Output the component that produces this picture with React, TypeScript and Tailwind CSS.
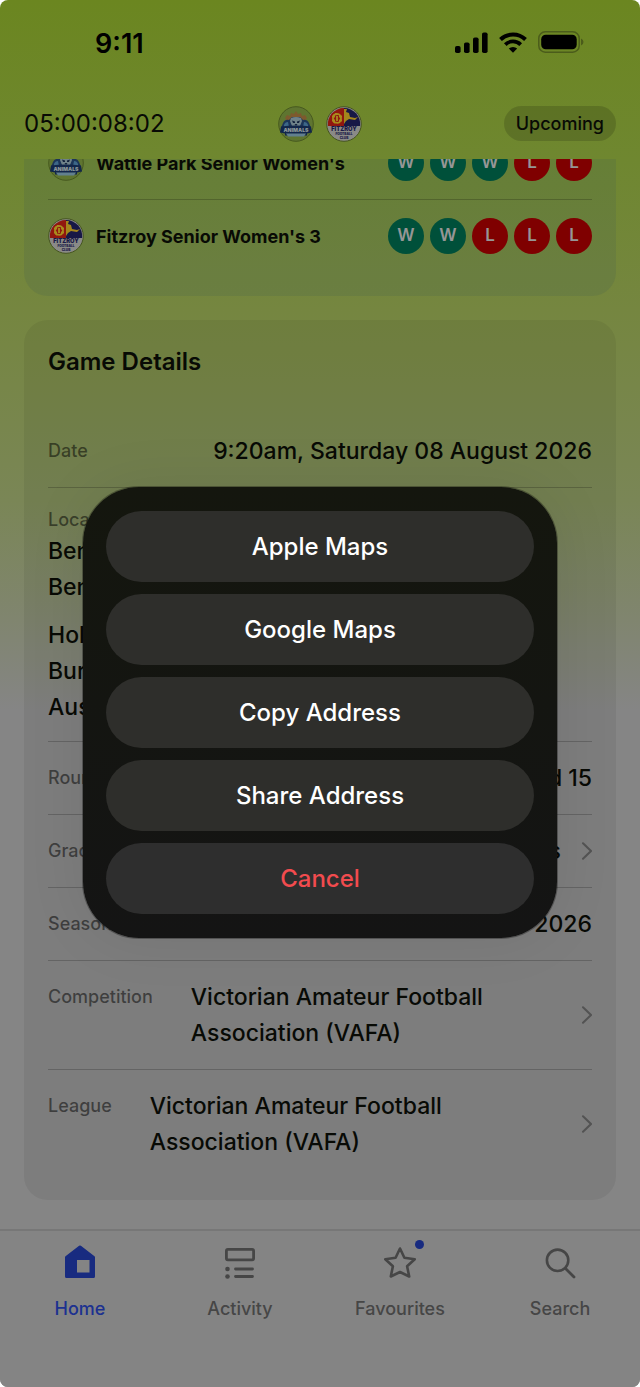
import React from 'react';

type Result = 'W' | 'L';

interface Team {
  name: string;
  logo: React.FC;
  form: Result[];
}

const AnimalsLogo: React.FC = () => (
  <svg viewBox="0 0 36 36" className="h-9 w-9 shrink-0" role="img" aria-label="Wattle Park">
    <circle cx="18" cy="18" r="17.3" fill="#5f7530" stroke="#47591f" strokeWidth="1" />
    <path d="M9 15l-2-3 2-3 3 1 1-3 3 1 2-3 2 3 3-1 1 3 3-1 2 3-2 3z" fill="#7d5a2e" />
    <path d="M5 17q2-4 6-3l3-3h8l3 3q4-1 6 3l2 5H3z" fill="#1c3558" />
    <path d="M6 19q1-3 4-3l1 5H6z M30 19q-1-3-4-3l-1 5h5z" fill="#3d6788" />
    <path d="M13 12q5-2 10 0l1 3-2 5q-4 3-8 0l-2-5z" fill="#6f8289" />
    <path d="M14 14.500l3 1v1.500h-2z M22 14.500l-3 1v1.500h2z M16.500 18h3L18 20z" fill="#14233d" />
    <path d="M3 20.500q15-2 30 0l1 6-5 1v2H7v-2l-5-1z" fill="#12264a" />
    <path d="M8 27.500h20l-2 3H10z" fill="#62808f" />
    <text
      x="18"
      y="26"
      textAnchor="middle"
      fontFamily="Inter, sans-serif"
      fontSize="5.2"
      fontWeight="900"
      fill="#8b9698"
    >
      ANIMALS
    </text>
  </svg>
);

const FitzroyLogo: React.FC = () => (
  <svg viewBox="0 0 36 36" className="h-9 w-9 shrink-0" role="img" aria-label="Fitzroy">
    <circle cx="18" cy="18" r="17.3" fill="#8a8a87" stroke="#465520" strokeWidth="1" />
    <path d="M2 20a16 16 0 0 1 16-18v18z" fill="#91170f" />
    <path d="M18 2a16 16 0 0 1 16 18H18z" fill="#171846" />
    <path d="M18 3h3l-1 3 3 1 1 4 5 1 3-1-3 3-6-1-3 2-2 3z" fill="#a4851c" />
    <path
      d="M11 8.500q-4-1-4 4t4 4M9 8q6-1 6 4.500t-6 4M11 10v5M6 10.500h3M6 14.500h3M13 10.500h3M13 14.500h3"
      fill="none"
      stroke="#a98b1d"
      strokeWidth="1.800"
    />
    <g fontFamily="Inter, sans-serif" fontWeight="900" textAnchor="middle" fill="#1a1a48">
      <text x="18" y="25.200" fontSize="5.800">
        FITZROY
      </text>
      <text x="18" y="29.200" fontSize="3.200">
        FOOTBALL
      </text>
      <text x="18" y="32.600" fontSize="3.200">
        CLUB
      </text>
    </g>
  </svg>
);

const teams: Team[] = [
  { name: "Wattle Park Senior Women's", logo: AnimalsLogo, form: ['W', 'W', 'W', 'L', 'L'] },
  { name: "Fitzroy Senior Women's 3", logo: FitzroyLogo, form: ['W', 'W', 'L', 'L', 'L'] },
];

const actions = ['Apple Maps', 'Google Maps', 'Copy Address', 'Share Address'];

const StatusBar: React.FC = () => (
  <div className="flex h-[88px] items-center justify-between pr-14 pl-[95px]">
    <span className="text-[27px] font-semibold text-black">9:11</span>
    <div className="flex items-center gap-[11px]">
      <svg width="33" height="21" viewBox="0 0 33 21" className="mb-1" aria-hidden="true">
        <rect x="0" y="14" width="5.600" height="7" rx="1.800" />
        <rect x="9" y="10.500" width="5.600" height="10.500" rx="1.800" />
        <rect x="18" y="5.500" width="5.600" height="15.500" rx="1.800" />
        <rect x="27" y="0.500" width="5.600" height="20.500" rx="1.800" />
      </svg>
      <svg width="28" height="21" viewBox="0 0 28 21" className="mb-1" aria-hidden="true">
        <path d="M1.500 7.500a18 18 0 0 1 25 0" fill="none" stroke="black" strokeWidth="4" />
        <path d="M6.300 12.600a11 11 0 0 1 15.400 0" fill="none" stroke="black" strokeWidth="3.800" />
        <path d="M14 20.800l-4.200-4.200a6 6 0 0 1 8.400 0z" />
      </svg>
      <svg width="46" height="22" viewBox="0 0 46 22" className="mb-1" aria-hidden="true">
        <rect x="0.800" y="0.800" width="40.400" height="20.400" rx="6.500" fill="none" stroke="#4b5c1b" strokeWidth="1.500" />
        <rect x="3.200" y="3.700" width="35.500" height="14.600" rx="4.500" />
        <path d="M43 7.500q2.500 1 2.500 3.500T43 14.500z" fill="#4b5c1b" />
      </svg>
    </div>
  </div>
);

const Chevron: React.FC = () => (
  <svg width="11" height="20" viewBox="0 0 11 20" className="shrink-0" aria-hidden="true">
    <path d="M2 2.200L10 10l-8 7.800" fill="none" stroke="#535353" strokeWidth="2" strokeLinecap="round" />
  </svg>
);

const TeamRow: React.FC<{ team: Team }> = ({ team }) => {
  const Logo = team.logo;
  return (
    <li className="flex items-center gap-3 border-b border-black/20 py-[18px] last:border-0">
      <Logo />
      <span className="flex-1 text-[18px] font-bold">{team.name}</span>
      <span className="flex gap-[6px]">
        {team.form.map((result, i) => (
          <span
            key={i}
            className={`flex h-9 w-9 items-center justify-center rounded-full text-[17px] font-semibold text-[#969696] ${
              result === 'W' ? 'bg-[#00503a]' : 'bg-[#7f0000]'
            }`}
          >
            {result}
          </span>
        ))}
      </span>
    </li>
  );
};

interface DetailRowProps {
  label: string;
  value: string;
  link?: boolean;
  wide?: boolean;
}

const DetailRow: React.FC<DetailRowProps> = ({ label, value, link, wide }) => {
  const content = (
    <>
      <span className="self-start text-[18px] leading-9 font-medium text-black/50">{label}</span>
      <span className={`flex-1 text-[23px] leading-9 font-medium ${wide ? 'pl-[18px]' : 'text-right'}`}>{value}</span>
      {link && <Chevron />}
    </>
  );
  const row = 'flex items-center gap-5 py-[18px]';

  return (
    <li className="border-b border-black/20 last:border-0">
      {link ? (
        <a href="#" className={row}>
          {content}
        </a>
      ) : (
        <div className={row}>{content}</div>
      )}
    </li>
  );
};

const HomeIcon = () => (
  <svg width="36" height="36" viewBox="0 0 36 36" aria-hidden="true">
    <path
      d="M18.900 1.800L32.500 12.200q.5.400.5 1V32.500q0 1.500-1.500 1.500H4.500Q3 34 3 32.500V13.200q0-.6.500-1L17.100 1.800q.9-.7 1.800 0zM15 16v12.500h12.500V16z"
      fill="#182b80"
      fillRule="evenodd"
    />
  </svg>
);

const ActivityIcon = () => (
  <svg width="36" height="36" viewBox="0 0 36 36" fill="none" stroke="currentColor" aria-hidden="true">
    <rect x="4.400" y="5.400" width="27.200" height="10.400" rx="1.500" strokeWidth="2.800" />
    <path d="M13.500 25h17M13.500 32.500h17" strokeWidth="2.800" strokeLinecap="round" />
    <circle cx="5.500" cy="25" r="2.300" fill="currentColor" stroke="none" />
    <circle cx="5.500" cy="32.500" r="2.300" fill="currentColor" stroke="none" />
  </svg>
);

const StarIcon = () => (
  <svg width="36" height="36" viewBox="0 0 36 36" fill="none" aria-hidden="true">
    <path
      d="M18 4.500l4.400 9.300 10.300 1.400-7.600 7 2.100 10.300L18 28l-9.200 4.500 2.100-10.300-7.600-7 10.300-1.400z"
      stroke="currentColor"
      strokeWidth="2.600"
      strokeLinejoin="round"
    />
  </svg>
);

const SearchIcon = () => (
  <svg width="36" height="36" viewBox="0 0 36 36" fill="none" stroke="currentColor" aria-hidden="true">
    <circle cx="15.600" cy="16.300" r="10.700" strokeWidth="2.600" />
    <path d="M23.500 24.500l8.500 8.500" strokeWidth="2.800" strokeLinecap="round" />
  </svg>
);

const tabs = [
  { name: 'Home', icon: HomeIcon, active: true },
  { name: 'Activity', icon: ActivityIcon },
  { name: 'Favourites', icon: StarIcon, badge: true },
  { name: 'Search', icon: SearchIcon },
];

const MapsDialog: React.FC = () => (
  <div className="absolute inset-0 flex items-center justify-center px-12 pt-[38px]">
    <div
      role="dialog"
      aria-modal="true"
      aria-label="Open address"
      className="flex w-full max-w-[474px] flex-col gap-3 rounded-[56px] bg-linear-to-b from-[#14160e] to-[#141414] px-[23px] py-6 shadow-[0_0_60px_rgba(0,0,0,0.08)] ring-1 ring-black/30"
    >
      {actions.map((action) => (
        <button
          key={action}
          type="button"
          className="h-[71px] rounded-full bg-[#2e2e2b] text-[24px] font-medium text-white"
        >
          {action}
        </button>
      ))}
      <button type="button" className="h-[71px] rounded-full bg-[#2e2e2e] text-[24px] font-medium text-[#f24b4e]">
        Cancel
      </button>
    </div>
  </div>
);

export default function App() {
  return (
    <div className="relative flex min-h-screen flex-col overflow-hidden rounded-lg bg-[#848484] bg-[linear-gradient(to_bottom,#6b8620_0px,#6f8730_160px,#758640_310px,#7a8656_500px,#80856f_620px,#858585_710px)] font-['Inter',sans-serif] text-[#080a05]">
      <header>
        <StatusBar />
        <div className="grid h-[71px] grid-cols-[1fr_auto_1fr] items-center px-6">
          <span className="text-[24px]">05:00:08:02</span>
          <div className="flex gap-3">
            <AnimalsLogo />
            <FitzroyLogo />
          </div>
          <span className="flex h-[35px] items-center justify-self-end rounded-full bg-black/15 px-3 text-[18px] font-medium">
            Upcoming
          </span>
        </div>
      </header>

      <main className="flex-1 overflow-hidden px-6 pb-[29px]">
        {/* Team form, scrolled partly under the header */}
        <section className="-mt-8 rounded-3xl bg-[#486050]/20 px-6 pb-6">
          <ul>
            {teams.map((team) => (
              <TeamRow key={team.name} team={team} />
            ))}
          </ul>
        </section>

        <section className="mt-6 rounded-3xl bg-black/6 px-6 pt-6 pb-[22px]">
          <h2 className="text-[24px] leading-9 font-semibold">Game Details</h2>
          <ul className="mt-[35px]">
            <DetailRow label="Date" value="9:20am, Saturday 08 August 2026" />
            <li className="border-b border-black/20 pt-[18px] pb-4 text-[23px] leading-9 font-medium">
              <p className="text-[18px] leading-[27px] text-black/50">Location</p>
              <p>Bennettswood Reserve</p>
              <p>Bennettswood Oval</p>
              <p className="mt-3">Holland Avenue</p>
              <p>Burwood VIC</p>
              <p>Australia</p>
            </li>
            <DetailRow label="Round" value="Round 15" />
            <DetailRow label="Grade" value="Senior Womens" link />
            <DetailRow label="Season" value="2026" />
            <DetailRow label="Competition" value="Victorian Amateur Football Association (VAFA)" link wide />
            <DetailRow label="League" value="Victorian Amateur Football Association (VAFA)" link wide />
          </ul>
        </section>
      </main>

      <nav className="grid h-[158px] grid-cols-4 items-start border-t-2 border-[#777777] bg-[#848484] pt-[13px]">
        {tabs.map(({ name, icon: Icon, active, badge }) => (
          <a
            key={name}
            href="#"
            className={`flex flex-col items-center gap-[15px] text-[18px] leading-7 font-medium ${
              active ? 'text-[#1c3190]' : 'text-[#464646]'
            }`}
          >
            <span className="relative">
              <Icon />
              {badge && <span className="absolute -top-1 -right-1.5 h-[9px] w-[9px] rounded-full bg-[#182b80]" />}
            </span>
            {name}
          </a>
        ))}
      </nav>

      <MapsDialog />
    </div>
  );
}
